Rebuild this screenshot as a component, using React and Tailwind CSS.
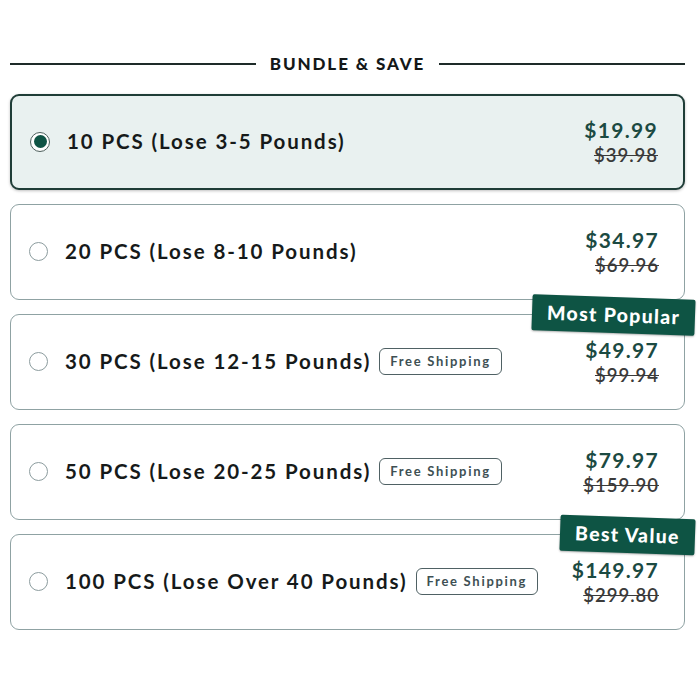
import React from "react";

const bundles = [
  { label: "10 PCS (Lose 3-5 Pounds)", price: "$19.99", was: "$39.98", selected: true },
  { label: "20 PCS (Lose 8-10 Pounds)", price: "$34.97", was: "$69.96" },
  { label: "30 PCS (Lose 12-15 Pounds)", price: "$49.97", was: "$99.94", ship: true, badge: "Most Popular" },
  { label: "50 PCS (Lose 20-25 Pounds)", price: "$79.97", was: "$159.90", ship: true },
  { label: "100 PCS (Lose Over 40 Pounds)", price: "$149.97", was: "$299.80", ship: true, badge: "Best Value" },
];

function Radio({ on }) {
  if (on) {
    return (
      <div className="w-[20px] h-[20px] rounded-full border-[1.5px] border-[#4d5f5c] bg-white flex items-center justify-center shrink-0">
        <div className="w-[13px] h-[13px] rounded-full bg-[#0f5445]" />
      </div>
    );
  }
  return <div className="w-[19px] h-[19px] rounded-full border-[1.5px] border-[#8c9c9e] bg-white shrink-0" />;
}

function Card({ item }) {
  return (
    <div
      className={
        "relative h-[96px] rounded-[9px] flex items-center pl-[18px] pr-[25px] " +
        (item.selected
          ? "border-2 border-[#1f3d37] bg-[#e9f1f0] shadow-[0_1px_3px_rgba(0,0,0,0.25)]"
          : "border-[1.5px] border-[#8fa2a3] bg-white")
      }
    >
      <Radio on={item.selected} />
      <div className="ml-[17px] text-[20.5px] font-bold tracking-[1.9px] text-[#161a1a]">{item.label}</div>
      {item.ship && (
        <div className="ml-[8px] h-[27px] px-[10px] flex items-center rounded-[6px] border-[1.5px] border-[#4f6164] text-[13px] font-bold tracking-[1.7px] text-[#3e5053]">
          Free Shipping
        </div>
      )}
      <div className="ml-auto flex flex-col items-end leading-none">
        <div className="text-[21px] font-bold tracking-[1.3px] text-[#1b4a42]">{item.price}</div>
        <div className="mt-[6px] text-[18.5px] font-semibold tracking-[1px] text-[#3a3a3a] line-through">{item.was}</div>
      </div>
      {item.badge && (
        <div className="absolute right-[-11px] top-[-18px] rotate-[2deg] bg-[#0e5444] text-white text-[19.5px] font-black tracking-[1.3px] px-[15px] h-[36px] flex items-center rounded-[2px] shadow-[0_1px_2px_rgba(0,0,0,0.3)]">
          {item.badge}
        </div>
      )}
    </div>
  );
}

export default function App() {
  return (
    <div className="w-[700px] h-[700px] bg-white font-['Lato',sans-serif] pl-[10px] pr-[15px] pt-[51px] overflow-hidden">
      <div className="flex items-center gap-[14px] mb-[17px]">
        <div className="flex-1 h-[2px] bg-[#1e2b29]" />
        <div className="text-[17px] font-black tracking-[1.9px] text-[#141818]">BUNDLE &amp; SAVE</div>
        <div className="flex-1 h-[2px] bg-[#1e2b29]" />
      </div>
      <div className="flex flex-col gap-[14px]">
        {bundles.map((b) => (
          <Card key={b.label} item={b} />
        ))}
      </div>
    </div>
  );
}
